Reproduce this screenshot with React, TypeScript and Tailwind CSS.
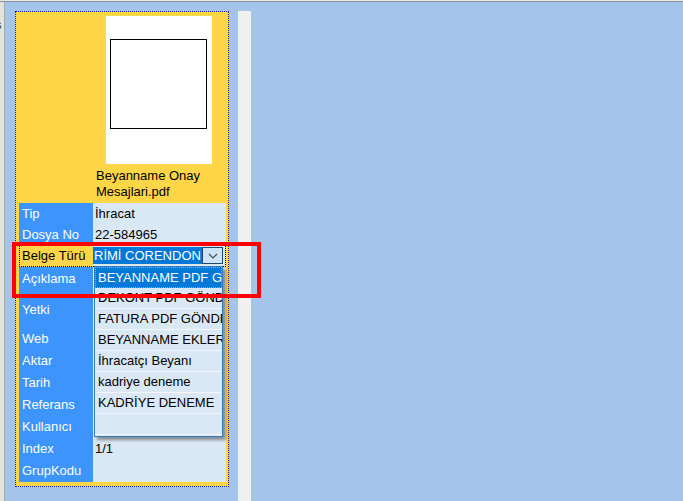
import React from "react";

const rows: { label: string; value: string; h: string }[] = [
  { label: "Tip", value: "İhracat", h: "h-[21px]" },
  { label: "Dosya No", value: "22-584965", h: "h-[21px]" },
];
const rows2: { label: string; value: string; h: string }[] = [
  { label: "Açıklama", value: "", h: "h-[24px]" },
  { label: "Yetki", value: "", h: "h-[37px]" },
  { label: "Web", value: "", h: "h-[22px]" },
  { label: "Aktar", value: "", h: "h-[22px]" },
  { label: "Tarih", value: "", h: "h-[22px]" },
  { label: "Referans", value: "", h: "h-[22px]" },
  { label: "Kullanıcı", value: "", h: "h-[22px]" },
  { label: "Index", value: "1/1", h: "h-[22px]" },
  { label: "GrupKodu", value: "", h: "h-[22px]" },
];

const items = [
  "BEYANNAME PDF GÖNDERİMİ",
  "DEKONT PDF GÖNDERİMİ",
  "FATURA PDF GÖNDERİMİ",
  "BEYANNAME EKLERİ",
  "İhracatçı Beyanı",
  "kadriye deneme",
  "KADRİYE DENEME",
  "",
];

function Row({ label, value, h }: { label: string; value: string; h: string }) {
  return (
    <div className={`flex ${h}`}>
      <div className="w-[74px] bg-[#3d94fd] text-white pl-[3px] flex items-center whitespace-nowrap overflow-hidden">
        {label}
      </div>
      <div className="flex-1 bg-[#dae8f5] text-black pl-[2px] flex items-center whitespace-nowrap overflow-hidden">
        {value}
      </div>
    </div>
  );
}

export default function App() {
  return (
    <div className="relative w-[683px] h-[501px] overflow-hidden bg-[#a4c4ea] font-['Liberation_Sans',Arial,sans-serif] text-[13px] leading-[16px]">
      <div className="h-[1px] bg-[#e9e9e9]" />
      <div className="h-[1px] bg-[#8a919c]" />
      <div className="flex h-[499px]">
        <div className="w-[4px] bg-[#e3e3e3] flex flex-col overflow-hidden text-[#333]">
          <div className="mt-[15px] -ml-[5px] h-[16px]">s</div>
          <div className="mt-[155px] -ml-[4px] h-[16px]">t</div>
        </div>
        <div className="w-[1px] bg-[#a9a9a9]" />
        <div className="flex-1 flex pl-[10px] pt-[9px]">
          <div className="relative w-[214px] h-[476px] bg-[#fed648] border border-dotted border-[#1a1a9c] flex flex-col">
            <div className="ml-[90px] mt-[4px] w-[106px] h-[148px] bg-white pl-[4px] pt-[23px]">
              <div className="w-[97px] h-[90px] border border-black" />
            </div>
            <div className="ml-[80px] mt-[4px] text-black">
              <div>Beyanname Onay</div>
              <div>Mesajlari.pdf</div>
            </div>
            <div className="ml-[3px] mr-[2px] mt-[3px] flex flex-col">
              {rows.map((r) => (
                <Row key={r.label} {...r} />
              ))}
              <div className="flex h-[22px] border border-dotted border-black">
                <div className="w-[73px] bg-[#fed648] text-black pl-[2px] flex items-center whitespace-nowrap">
                  Belge Türü
                </div>
                <div className="flex-1 bg-[#dae8f5] flex pt-[1px] pr-[2px] pb-[2px]">
                  <div className="flex-1 bg-[#0078d7] text-white pl-[1px] flex items-center whitespace-nowrap overflow-hidden">
                    RİMİ CORENDON
                  </div>
                  <div className="w-[21px] bg-[#cce4f7] border border-[#1c4a73] flex items-center justify-center">
                    <svg width="10" height="6" viewBox="0 0 10 6">
                      <path d="M1 1 L5 5 L9 1" fill="none" stroke="#4a4a4a" strokeWidth="1.2" />
                    </svg>
                  </div>
                </div>
              </div>
              {rows2.map((r) => (
                <Row key={r.label} {...r} />
              ))}
            </div>

            <div className="absolute left-[78px] top-[254px] w-[129px] h-[171px] bg-[#dae8f5] border border-[#3a7bb5] shadow-[3px_3px_3px_rgba(0,0,0,0.4)] flex flex-col">
              {items.map((t, i) => (
                <div
                  key={i}
                  className={
                    i === 0
                      ? "h-[21px] bg-[#0078d7] text-white pl-[3px] flex items-center whitespace-nowrap overflow-hidden outline outline-1 outline-dotted outline-[#e8963a] -outline-offset-1"
                      : "h-[21px] text-black pl-[3px] flex items-center whitespace-nowrap overflow-hidden border-b border-[#f3f7fb]"
                  }
                >
                  {t}
                </div>
              ))}
            </div>
          </div>
          <div className="ml-[9px] w-[13px] bg-[#f0f0f0]" />
        </div>
      </div>
      <div className="absolute left-[12px] top-[242px] w-[249px] h-[56px] border-4 border-[#ff0000]" />
    </div>
  );
}
